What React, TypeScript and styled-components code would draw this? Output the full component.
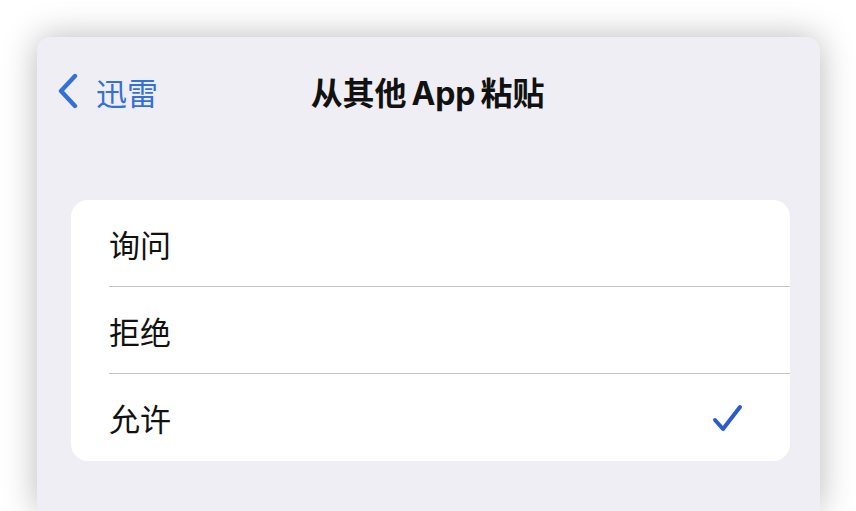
import styled, { createGlobalStyle } from 'styled-components'

const GlobalStyle = createGlobalStyle`
  html, body {
    margin: 0;
    padding: 0;
    background: #ffffff;
    overflow: hidden;
  }
  body {
    font-family: Inter, "Noto Sans CJK SC", sans-serif;
  }
`

const Page = styled.div`
  width: 856px;
  height: 511px;
  padding: 37px 36px 0 37px;
  box-sizing: border-box;
`

const Sheet = styled.div`
  height: 100%;
  background: #efeef4;
  border-radius: 13px 13px 0 0;
  box-shadow: 0 0 34px rgba(0, 0, 0, 0.28);
  display: flex;
  flex-direction: column;
`

const NavBar = styled.div`
  height: 108px;
  display: grid;
  grid-template-columns: 1fr auto 1fr;
  align-items: center;
  padding: 0 22px 0 20px;
`

const BackButton = styled.div`
  display: flex;
  align-items: center;
  gap: 17px;
  color: #3370d8;
  font-size: 31px;
`

const Title = styled.div`
  font-size: 32px;
  font-weight: 700;
  color: #111;
  letter-spacing: -0.2px;
  word-spacing: -2px;
`

const Card = styled.div`
  margin: 55px 30px 0 34px;
  background: #ffffff;
  border-radius: 17px;
  overflow: hidden;
`

const Row = styled.div`
  height: 87px;
  padding-left: 38px;
  display: flex;
  align-items: center;
`

const RowInner = styled.div<{ $last?: boolean }>`
  flex: 1;
  height: 100%;
  display: flex;
  align-items: center;
  justify-content: space-between;
  padding-right: 46px;
  box-sizing: border-box;
  border-bottom: ${p => (p.$last ? 'none' : '1px solid #c4c4c7')};
`

const Label = styled.span`
  font-size: 31px;
  color: #111;
`

const options = ['询问', '拒绝', '允许']
const selected = '允许'

export default function App() {
  return (
    <>
      <GlobalStyle />
      <Page>
        <Sheet>
          <NavBar>
            <BackButton>
              <svg width="22" height="36" viewBox="0 0 22 36">
                <path
                  d="M18 3 L4 18 L18 33"
                  fill="none"
                  stroke="#3370d8"
                  strokeWidth="4.4"
                  strokeLinecap="round"
                  strokeLinejoin="round"
                />
              </svg>
              迅雷
            </BackButton>
            <Title>从其他 App 粘贴</Title>
            <div />
          </NavBar>
          <Card>
            {options.map((o, i) => (
              <Row key={o}>
                <RowInner $last={i === options.length - 1}>
                  <Label>{o}</Label>
                  {o === selected && (
                    <svg width="32" height="30" viewBox="0 0 32 30">
                      <path
                        d="M3 17 L11 26 L28 4"
                        fill="none"
                        stroke="#2c5bcc"
                        strokeWidth="4"
                        strokeLinecap="round"
                        strokeLinejoin="round"
                      />
                    </svg>
                  )}
                </RowInner>
              </Row>
            ))}
          </Card>
        </Sheet>
      </Page>
    </>
  )
}
